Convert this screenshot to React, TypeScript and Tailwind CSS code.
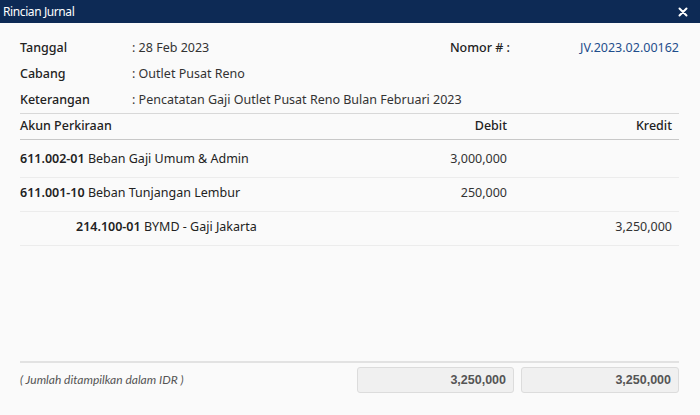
import React from "react";

interface Line {
  code: string;
  name: string;
  debit?: string;
  kredit?: string;
  indent?: boolean;
}

const lines: Line[] = [
  { code: "611.002-01", name: "Beban Gaji Umum & Admin", debit: "3,000,000" },
  { code: "611.001-10", name: "Beban Tunjangan Lembur", debit: "250,000" },
  { code: "214.100-01", name: "BYMD - Gaji Jakarta", kredit: "3,250,000", indent: true },
];

function InfoRow({ label, value }: { label: string; value: string }) {
  return (
    <div className="flex h-[26px] items-center">
      <span className="w-[112px] font-medium text-[#222]">{label}</span>
      <span className="text-[#333]">: {value}</span>
    </div>
  );
}

export default function App() {
  return (
    <div
      className="w-[700px] h-[415px] flex flex-col bg-[#fafafa] text-[12.5px]"
      style={{ fontFamily: '"Noto Sans", "Open Sans", sans-serif' }}
    >
      <div className="h-[23px] bg-[#0d2a55] flex items-center justify-between pl-[3px] pr-[12px] text-white">
        <span className="text-[12px] tracking-[-0.4px]">Rincian Jurnal</span>
        <svg width="10" height="10" viewBox="0 0 10 10">
          <path d="M1.5 1.5 L8.5 8.5 M8.5 1.5 L1.5 8.5" stroke="white" strokeWidth="2" strokeLinecap="round" />
        </svg>
      </div>

      <div className="flex-1 flex flex-col pl-[20px] pr-[21px] pt-[12px]">
        <div className="border-b border-[#d8d8d8]">
          <div className="flex">
            <div className="flex-1">
              <InfoRow label="Tanggal" value="28 Feb 2023" />
            </div>
            <div className="flex h-[26px] items-center">
              <span className="font-medium text-[#222] w-[120px] text-right">Nomor # :</span>
              <span className="w-[169px] text-right text-[#1f4e8c]">JV.2023.02.00162</span>
            </div>
          </div>
          <InfoRow label="Cabang" value="Outlet Pusat Reno" />
          <InfoRow label="Keterangan" value="Pencatatan Gaji Outlet Pusat Reno Bulan Februari 2023" />
        </div>

        <div className="flex-1">
          <div className="flex h-[26px] items-center border-b border-[#c8c8c8] font-medium text-[#222]">
            <span className="flex-1">Akun Perkiraan</span>
            <span className="w-[165px] text-right pr-[7px]">Debit</span>
            <span className="w-[165px] text-right pr-[7px]">Kredit</span>
          </div>
          <div className="pt-[4px]">
            {lines.map((l) => (
              <div key={l.code} className="flex h-[34px] items-center pb-[3px] border-b border-[#ececec] text-[#222]">
                <span className={l.indent ? "flex-1 pl-[56px]" : "flex-1"}>
                  <span className="font-semibold">{l.code}</span> {l.name}
                </span>
                <span className="w-[165px] text-right pr-[7px] text-[#333]">{l.debit}</span>
                <span className="w-[165px] text-right pr-[7px] text-[#333]">{l.kredit}</span>
              </div>
            ))}
          </div>
        </div>

        <div className="border-t-2 border-[#e2e2e2] flex items-start pt-[4px] pb-[22px]">
          <span className="flex-1 self-center text-[12px] italic text-[#555]" style={{ fontFamily: "Lato, sans-serif" }}>
            ( Jumlah ditampilkan dalam IDR )
          </span>
          <div className="flex gap-[7px]">
            <div
              className="w-[157px] h-[26px] flex items-center justify-end pr-[7px] bg-[#f0f0f0] border border-[#dcdcdc] rounded-[3px] font-bold text-[#555]"
              style={{ fontFamily: '"Liberation Sans", Arial, sans-serif' }}
            >
              3,250,000
            </div>
            <div
              className="w-[158px] h-[26px] flex items-center justify-end pr-[7px] bg-[#f0f0f0] border border-[#dcdcdc] rounded-[3px] font-bold text-[#555]"
              style={{ fontFamily: '"Liberation Sans", Arial, sans-serif' }}
            >
              3,250,000
            </div>
          </div>
        </div>
      </div>
    </div>
  );
}
